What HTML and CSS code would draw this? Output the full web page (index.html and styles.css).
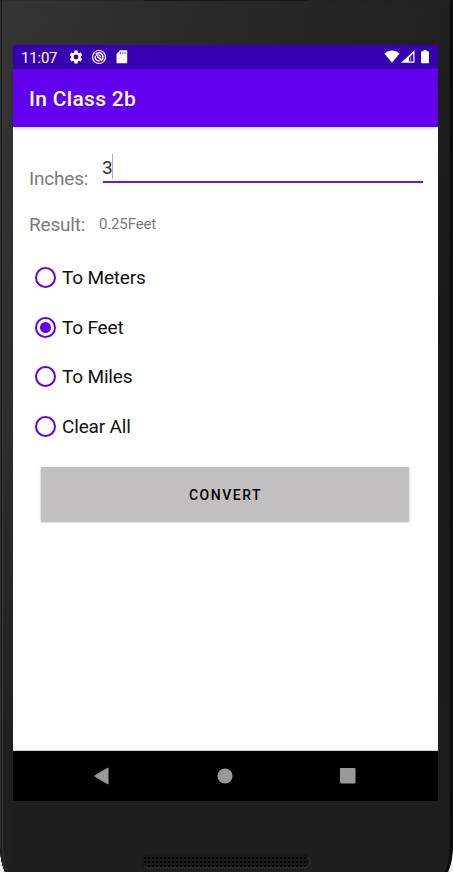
FILE: index.html
```html
<!DOCTYPE html>
<html lang="en">
<head>
<meta charset="utf-8">
<title>In Class 2b</title>
<link rel="stylesheet" href="styles.css">
</head>
<body>
<div class="phone">
  <div class="earpiece"></div>
  <main class="screen">
    <div class="status">
      <span class="clock">11:07</span>
      <svg class="gear" width="16" height="16" viewBox="0 0 24 24"><path fill="#fff" d="M19.14 12.94c.04-.3.06-.61.06-.94s-.02-.64-.07-.94l2.03-1.58a.49.49 0 0 0 .12-.61l-1.92-3.32a.49.49 0 0 0-.59-.22l-2.39.96a7 7 0 0 0-1.62-.94l-.36-2.54a.48.48 0 0 0-.48-.41h-3.84a.47.47 0 0 0-.47.41l-.36 2.54c-.59.24-1.13.57-1.62.94l-2.39-.96a.47.47 0 0 0-.59.22L2.74 8.87a.48.48 0 0 0 .12.61l2.03 1.58a6 6 0 0 0 0 1.88l-2.03 1.58a.49.49 0 0 0-.12.61l1.92 3.32c.12.22.37.29.59.22l2.39-.96c.5.38 1.03.7 1.62.94l.36 2.54c.05.24.24.41.48.41h3.84c.24 0 .44-.17.47-.41l.36-2.54c.59-.24 1.13-.56 1.62-.94l2.39.96c.22.08.47 0 .59-.22l1.920-3.320a.47.47 0 0 0-.12-.61zM12 15.600A3.600 3.600 0 1 1 12 8.400a3.600 3.600 0 0 1 0 7.200z"/></svg>
      <svg class="assist" width="16" height="16" viewBox="0 0 16 16" fill="none" stroke="#fff"><circle cx="8" cy="8" r="6.500" stroke-width="1.200"/><path stroke-width="1.500" d="M4.700 5.300a4 4 0 1 1 6.300 5.500M6.200 7.400l4.900 4.200"/><path stroke-width="1.400" d="M4.200 7a4 4 0 0 0 4.600 4.900"/><path stroke-width="1.100" d="M4.700 6.600q3.300-2 5.300 1.600"/></svg>
      <svg class="sd" width="12" height="14" viewBox="0 0 12 14"><path fill="#fff" d="M4 .3h6.200c.6 0 1 .4 1 1v11c0 .6-.4 1-1 1H1.500c-.6 0-1-.4-1-1V4z"/><path stroke="#3700b3" stroke-opacity=".75" stroke-width=".9" d="M4.500 1.800v2.500M6.800 1.800v2.500M9.100 1.800v2.500"/></svg>
      <svg class="signals" width="48" height="16" viewBox="0 0 48 16"><path fill="#fff" d="M.4 4.500C4.600.5 11.400.5 15.600 4.500L8 13.800z"/><path fill="#fff" fill-rule="evenodd" d="M30.500 1.300v12.500H17zM29.300 4.500 25 8.800v3.800h4.300z"/><path fill="none" stroke="#fff" stroke-width=".6" d="M26.700 7.500v5.300"/><path fill="#fff" d="M39.500 1h3v1.200h1.800q.7 0 .7.700v10.700q0 .7-.7.700h-6.600q-.7 0-.7-.7V2.900q0-.7.7-.7h1.800z"/></svg>
    </div>
    <header class="appbar"><h1>In Class 2b</h1></header>
    <section class="content">
      <div class="row inches">
        <span class="label">Inches:</span>
        <div class="field"><span class="value">3</span><span class="caret"></span></div>
      </div>
      <div class="row result"><span class="label">Result:</span><span class="output">0.25Feet</span></div>
      <div class="options">
        <div class="option"><i class="radio"></i><span>To Meters</span></div>
        <div class="option"><i class="radio checked"></i><span>To Feet</span></div>
        <div class="option"><i class="radio"></i><span>To Miles</span></div>
        <div class="option"><i class="radio"></i><span>Clear All</span></div>
      </div>
      <button class="convert">CONVERT</button>
    </section>
    <nav class="nav">
      <svg width="16" height="18" viewBox="0 0 16 18"><path fill="#999" stroke="#999" stroke-linejoin="round" d="M.5 9 14 1v16z"/></svg>
      <svg width="16" height="16" viewBox="0 0 16 16"><circle cx="8" cy="8" r="7.600" fill="#999"/></svg>
      <svg width="16" height="16" viewBox="0 0 16 16"><rect width="15.500" height="15.500" rx="1" fill="#999"/></svg>
    </nav>
  </main>
  <div class="speaker"></div>
</div>
</body>
</html>
```
FILE: styles.css
```css
* { box-sizing: border-box; }
html { overflow: hidden; }
body {
  margin: 0;
  width: 453px;
  height: 872px;
  overflow: hidden;
  background: #eee;
  font-family: Roboto, sans-serif;
}
.phone {
  position: relative;
  height: 884px;
  padding: 45px 15px 0 13px;
  border: solid #111;
  border-width: 0 1px 1px 0;
  border-radius: 0 0 18px 18px / 0 0 38px 38px;
  background:
    linear-gradient(100deg, #353536 0, #292929 45%, #202020 100%) 0 0 / 100% 45px no-repeat,
    linear-gradient(#343434, #2e2e2e 45%, #1f1f1f 85%) 0 0 / 13px 100% no-repeat,
    linear-gradient(#212121, #191919 35%, #1e1e1e) 100% 0 / 15px 100% no-repeat,
    #1e1e1f;
  box-shadow: inset 1px 0 1px #333, inset 2px 0 1px #141414, inset 3px 0 1px #3c3c3c, inset -2px 0 1px #090909;
}
.earpiece {
  position: absolute;
  top: 0;
  left: 144px;
  width: 162px;
  height: 1px;
  background: #151515;
}
.screen {
  display: flex;
  flex-direction: column;
  width: 425px;
  height: 756px;
  background: #fff;
}
.status {
  display: flex;
  align-items: center;
  height: 24px;
  padding: 0 6px 0 8px;
  background: #3700b3;
  color: #fff;
}
.clock { width: 47px; font-size: 15px; line-height: 24px; padding-top: 1px; letter-spacing: -.2px; }
.assist { margin-left: 7px; }
.sd { margin-left: 9px; }
.signals { margin-left: auto; }
.appbar {
  display: flex;
  align-items: center;
  height: 58px;
  padding: 2px 16px 0;
  background: #6200ee;
  color: #fff;
  box-shadow: 0 1px 4px rgba(0, 0, 0, .22);
}
h1 { margin: 0; font-size: 21px; font-weight: 500; letter-spacing: .3px; }
.content { flex: 1; padding: 25px 15px 0 16px; border-bottom: 1px solid #d0d2d2; }
.row { display: flex; color: #7b7b7b; }
.label { font-size: 19px; line-height: 24px; letter-spacing: -.2px; }
.inches { height: 32px; }
.inches .label { width: 74px; padding-top: 15px; }
.field {
  display: flex;
  flex: 1;
  height: 31px;
  border-bottom: 2px solid #6a12e8;
  color: #333;
}
.value { margin-left: -1px; font-size: 19px; line-height: 31px; }
.caret { width: 1px; height: 25px; margin-top: 2px; margin-left: -1px; background: #b6a0f5; }
.result { margin-top: 29px; }
.result .label { width: 70px; }
.output { font-size: 15px; line-height: 23px; letter-spacing: -.15px; }
.options { margin-top: 16px; }
.option {
  display: flex;
  align-items: center;
  gap: 6px;
  height: 49.6px;
  padding-left: 6px;
  font-size: 19px;
  letter-spacing: -.17px;
  color: #111;
}
.radio {
  display: grid;
  place-items: center;
  width: 21px;
  height: 21px;
  border: 2px solid #6200ee;
  border-radius: 50%;
}
.checked::after { content: ""; width: 11px; height: 11px; border-radius: 50%; background: #6200ee; }
.convert {
  display: block;
  width: 368px;
  height: 54px;
  margin: 16px 0 0 12px;
  padding: 2px 0 0 1px;
  border: 0;
  background: #c1bfc0;
  color: #000;
  font: 500 14px Roboto, sans-serif;
  letter-spacing: 1.5px;
  box-shadow: 0 1px 2px rgba(0, 0, 0, .35);
}
.nav {
  display: flex;
  align-items: center;
  height: 50px;
  gap: 107px;
  padding-left: 80.5px;
  background: #000;
}
.speaker {
  width: 170px;
  height: 15px;
  margin: 53px 0 0 128px;
  border: 2px solid #181818;
  border-right-color: #2c2c2c;
  border-bottom-color: #292929;
  border-radius: 8px;
  background: radial-gradient(circle, #000 1px, #191919 1.5px) 0 0 / 4px 4px;
}
```
